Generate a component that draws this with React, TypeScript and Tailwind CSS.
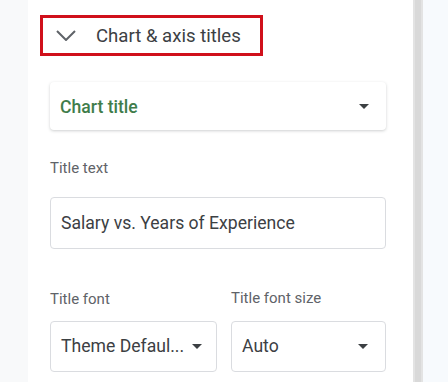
import React from "react";

function Caret({ className = "" }: { className?: string }) {
  return (
    <svg width="10" height="5" viewBox="0 0 10 5" className={className}>
      <path d="M0 0 L10 0 L5 5 Z" fill="#3c4043" />
    </svg>
  );
}

export default function App() {
  return (
    <div
      className="flex h-[382px] w-[448px] overflow-hidden bg-white"
      style={{ fontFamily: "Roboto, 'Noto Sans', sans-serif" }}
    >
      <div className="w-[28px] shrink-0 bg-[#f8f9fa]" />
      <div className="flex w-[385px] shrink-0 flex-col bg-white">
        <div className="ml-[12px] mt-[15px] flex h-[41px] w-[223px] items-center border-[3px] border-[#d0101b]">
          <svg width="20" height="11" viewBox="0 0 20 11" className="ml-[13px]">
            <path d="M1 1 L10 10 L19 1" fill="none" stroke="#5f6368" strokeWidth="2" />
          </svg>
          <span className="ml-[20px] pt-[1px] text-[18.6px] leading-none text-[#3c4043]">Chart &amp; axis titles</span>
        </div>

        <div className="ml-[22px] mt-[26px] flex h-[48px] w-[336px] items-center justify-between rounded-[4px] bg-white pl-[10px] pr-[17px] shadow-[0_1px_3px_rgba(60,64,67,0.25)]">
          <span className="pt-[3px] text-[17.6px] font-medium leading-none text-[#3f7d4b]">Chart title</span>
          <Caret />
        </div>

        <div className="ml-[22px] mt-[31px] text-[15px] leading-none text-[#5f6368]">Title text</div>

        <div className="ml-[22px] mt-[21px] flex h-[52px] w-[336px] items-center rounded-[4px] border border-[#dadce0] pl-[10px]">
          <span className="pt-[1px] text-[17.6px] leading-none text-[#3c4043]">Salary vs. Years of Experience</span>
        </div>

        <div className="ml-[22px] mt-[43px] flex">
          <div className="flex w-[181px] flex-col">
            <div className="text-[15px] leading-none text-[#5f6368]">Title font</div>
            <div className="mt-[14px] flex h-[51px] w-[167px] items-center justify-between rounded-[4px] border border-[#dadce0] pl-[10px] pr-[14px]">
              <span className="pt-[1px] text-[17.6px] leading-none text-[#3c4043]">Theme Defaul...</span>
              <Caret />
            </div>
          </div>
          <div className="flex w-[155px] flex-col">
            <div className="mt-[-1px] text-[15px] leading-none text-[#5f6368]">Title font size</div>
            <div className="mt-[15px] flex h-[51px] w-[155px] items-center justify-between rounded-[4px] border border-[#dadce0] pl-[10px] pr-[17px]">
              <span className="pt-[1px] text-[17.6px] leading-none text-[#3c4043]">Auto</span>
              <Caret />
            </div>
          </div>
        </div>
      </div>
      <div className="flex w-[10px] shrink-0 bg-[#e3e3e3]">
        <div className="ml-[2px] w-[6px] bg-[#d9d9d9]" />
      </div>
      <div className="flex-1 bg-[#f7fafd]" />
    </div>
  );
}
